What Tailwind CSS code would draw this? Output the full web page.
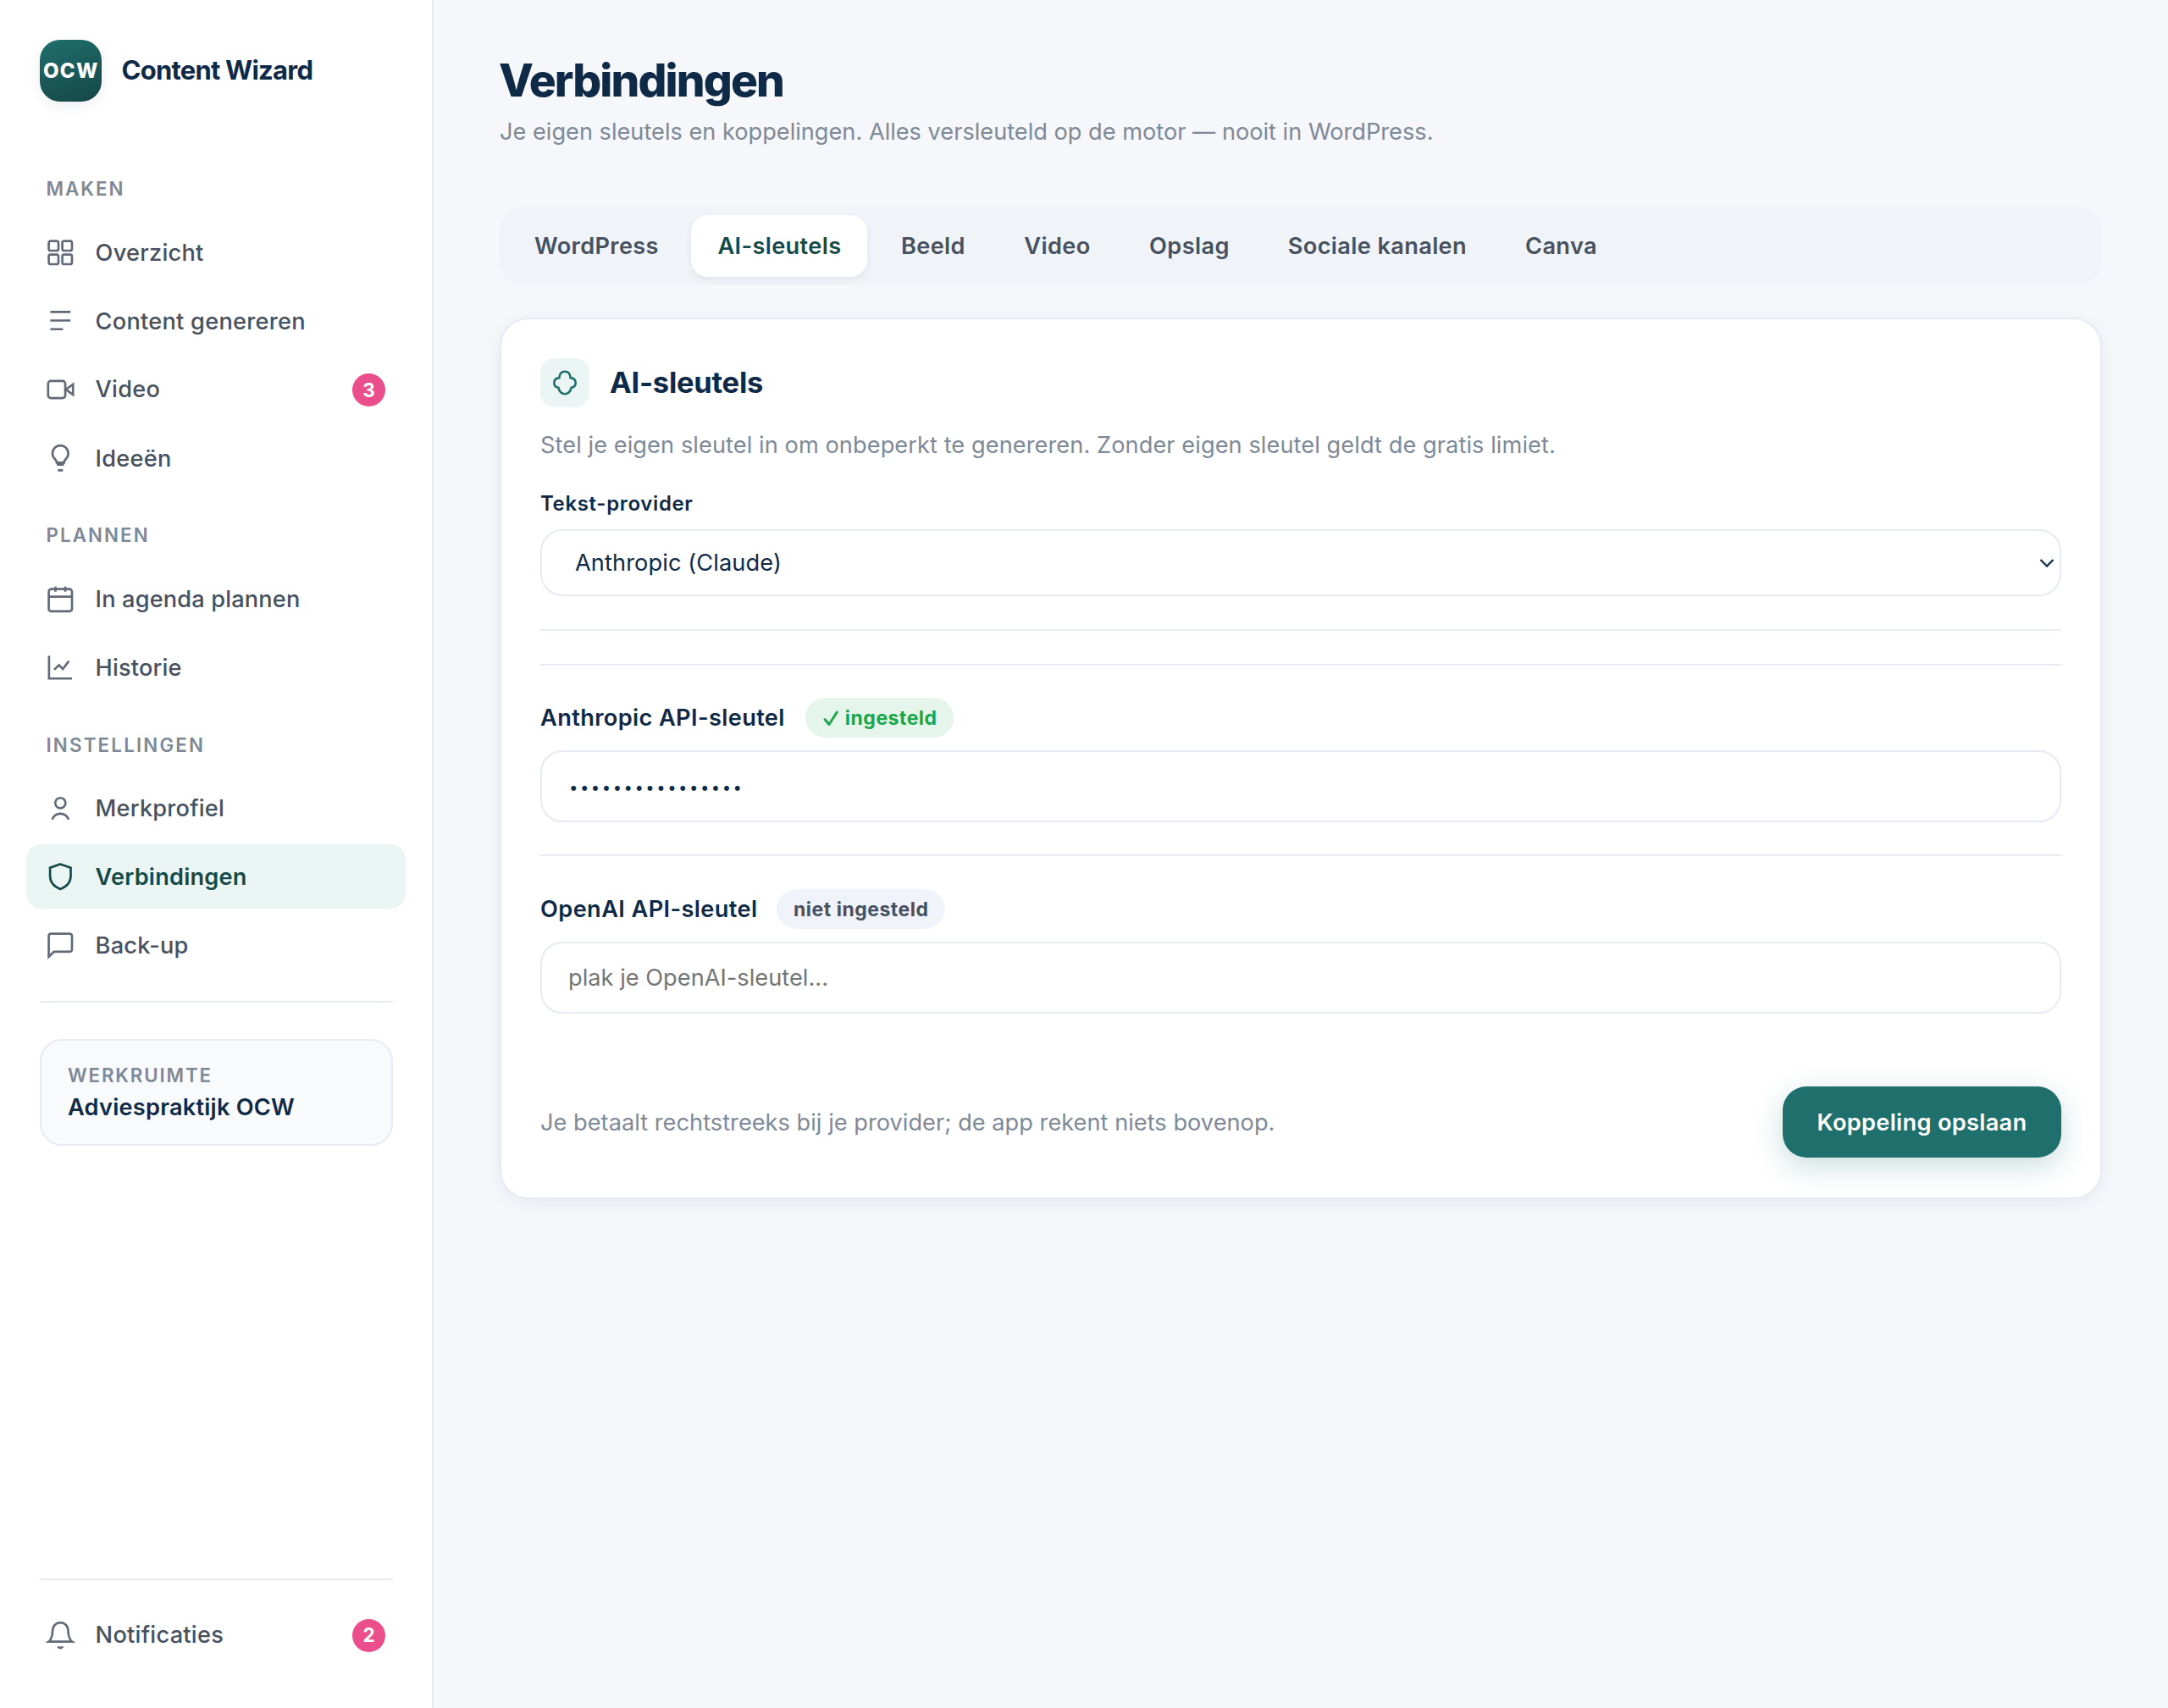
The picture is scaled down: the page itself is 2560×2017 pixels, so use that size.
<!DOCTYPE html>
<html lang="nl">
  <head>
    <meta charset="UTF-8" />
    <title>Content Wizard - Verbindingen</title>
    <script src="https://cdn.jsdelivr.net/npm/@tailwindcss/browser@4"></script>
  </head>
  <body
    class="h-screen flex overflow-hidden bg-[#f5f7fb] font-['Inter','Liberation_Sans',sans-serif] text-[27.2px] text-[#0f2a47]"
  >
    <!-- Zijbalk -->
    <aside
      class="w-[512px] shrink-0 flex flex-col bg-white border-r-2 border-[#e6ebf3] px-[31px] pt-[46.5px] pb-[48px]"
    >
      <div class="flex items-center gap-[23.5px] pl-[15.5px]">
        <div
          class="size-[73.5px] rounded-[24px] bg-linear-160 from-[#1f6f6d] to-[#154646] shadow-[0_5px_15px_rgba(15,42,71,0.08)] flex items-center justify-center text-white text-[24px] font-extrabold tracking-[1.3px] pl-[1px] pt-[2px]"
        >
          OCW
        </div>
        <div class="text-[31px] font-bold tracking-[-0.77px]">
          Content Wizard
        </div>
      </div>

      <h3
        class="mt-[89px] ml-[23.5px] h-[28px] leading-[28px] text-[22.3px] font-semibold tracking-[2px] text-[#7e8998]"
      >
        MAKEN
      </h3>
      <nav
        class="mt-[23px] flex flex-col gap-[5.2px] font-medium text-[#475160] tracking-[0.25px]"
      >
        <a class="h-[76px] flex items-center gap-[23px] px-[22px]">
          <svg class="size-[36.6px] opacity-85" viewBox="0 0 24 24" fill="none" stroke="currentColor" stroke-width="1.75">
            <rect x="3" y="3" width="7.5" height="7.5" rx="1.5" />
            <rect x="13.5" y="3" width="7.5" height="7.5" rx="1.5" />
            <rect x="3" y="13.5" width="7.5" height="7.5" rx="1.5" />
            <rect x="13.5" y="13.5" width="7.5" height="7.5" rx="1.5" />
          </svg>
          <span class="pt-[2px]">Overzicht</span>
        </a>
        <a class="h-[76px] flex items-center gap-[23px] px-[22px]">
          <svg class="size-[36.6px] opacity-85" viewBox="0 0 24 24" fill="none" stroke="currentColor" stroke-width="1.75">
            <path d="M4.2 4.8h15.6M4.2 11.5h15.6M4.2 18.2h9.8" />
          </svg>
          <span class="pt-[2px]">Content genereren</span>
        </a>
        <a class="h-[76px] flex items-center gap-[23px] pl-[22px] pr-[24px]">
          <svg class="size-[36.6px] opacity-85" viewBox="0 0 24 24" fill="none" stroke="currentColor" stroke-width="1.75">
            <rect x="2.5" y="5.2" width="13.3" height="13.2" rx="2" />
            <path d="M16.2 11.8l5.6-4v8z" />
          </svg>
          <span class="flex-1 pt-[1px]">Video</span>
          <span
            class="size-[39px] rounded-full bg-[#ea4f8b] text-white text-[22.5px] font-bold tracking-normal flex items-center justify-center"
            >3</span
          >
        </a>
        <a class="h-[76px] flex items-center gap-[23px] px-[22px]">
          <svg class="size-[36.6px] opacity-85" viewBox="0 0 24 24" fill="none" stroke="currentColor" stroke-width="1.75">
            <path d="M9.2 16.9h5.6M10 21.2h4M12 2a6.1 6.1 0 0 0-6.1 6.2c0 2 .9 3.4 2.1 4.6.8.8 1.1 1.5 1.2 2.5h5.6c.1-1 .4-1.7 1.2-2.5 1.2-1.2 2.1-2.6 2.1-4.6A6.1 6.1 0 0 0 12 2z" />
          </svg>
          <span class="pt-[1px]">Ideeën</span>
        </a>
      </nav>

      <h3
        class="mt-[38.5px] ml-[23.5px] h-[28px] leading-[28px] text-[22.3px] font-semibold tracking-[2.1px] text-[#7e8998]"
      >
        PLANNEN
      </h3>
      <nav
        class="mt-[23px] flex flex-col gap-[5.2px] font-medium text-[#475160] tracking-[0.15px]"
      >
        <a class="h-[76px] flex items-center gap-[23px] px-[22px]">
          <svg class="size-[36.6px] opacity-85" viewBox="0 0 24 24" fill="none" stroke="currentColor" stroke-width="1.75">
            <rect x="3" y="4.4" width="18" height="17.2" rx="2" />
            <path d="M3 10.2h18M8.2 2.5v3.9M15.8 2.5v3.9" />
          </svg>
          <span class="pt-[2px]">In agenda plannen</span>
        </a>
        <a class="h-[76px] flex items-center gap-[23px] px-[22px]">
          <svg class="size-[36.6px] opacity-85" viewBox="0 0 24 24" fill="none" stroke="currentColor" stroke-width="1.75">
            <path d="M3.2 3v17.5H21M7.2 13.7l3.7-3.6 3 3L18.6 7" />
          </svg>
          <span class="pt-[2px]">Historie</span>
        </a>
      </nav>

      <h3
        class="mt-[38.7px] ml-[23.5px] h-[28px] leading-[28px] pt-[1px] text-[22.3px] font-semibold tracking-[2.2px] text-[#7e8998]"
      >
        INSTELLINGEN
      </h3>
      <nav
        class="mt-[23px] flex flex-col gap-[5.2px] font-medium text-[#475160] tracking-[0.2px]"
      >
        <a class="h-[76px] flex items-center gap-[23px] px-[22px]">
          <svg class="size-[36.6px] opacity-85" viewBox="0 0 24 24" fill="none" stroke="currentColor" stroke-width="1.75">
            <circle cx="12" cy="8.1" r="4" />
            <path d="M5.6 20.9c1.1-2.8 3.6-4.6 6.4-4.6s5.3 1.8 6.4 4.6" />
          </svg>
          <span class="pt-[2px]">Merkprofiel</span>
        </a>
        <a
          class="h-[76px] flex items-center gap-[23px] px-[22px] rounded-[18px] bg-[#ebf6f4] text-[#154a49] font-semibold"
        >
          <svg class="size-[36.6px]" viewBox="0 0 24 24" fill="none" stroke="currentColor" stroke-width="1.75">
            <path d="M12 2.3l8 2.7v6.5c0 4.8-3.2 8.2-8 10.1-4.8-1.9-8-5.3-8-10.1V5z" />
          </svg>
          <span class="pt-[2px]">Verbindingen</span>
        </a>
        <a class="h-[76px] flex items-center gap-[23px] px-[22px]">
          <svg class="size-[36.6px] opacity-85" viewBox="0 0 24 24" fill="none" stroke="currentColor" stroke-width="1.75">
            <path d="M21 15.2a1.8 1.8 0 0 1-1.8 1.8H7l-4 3.9V4.8A1.8 1.8 0 0 1 4.8 3h14.4A1.8 1.8 0 0 1 21 4.8z" />
          </svg>
          <span class="pt-[2px]">Back-up</span>
        </a>
      </nav>

      <hr class="mt-[27.5px] mx-[15.5px] border-t-2 border-[#e6ebf2]" />
      <div
        class="mt-[42.8px] mx-[15.5px] h-[126.5px] rounded-[26px] border-2 border-[#e6eaf2] bg-[#f9fafc] pt-[27px] pl-[31.5px]"
      >
        <div
          class="h-[28px] leading-[28px] text-[22.3px] font-semibold tracking-[1.85px] text-[#7e8998]"
        >
          WERKRUIMTE
        </div>
        <div
          class="mt-[5.7px] h-[38px] leading-[38px] font-semibold tracking-[0.22px]"
        >
          Adviespraktijk OCW
        </div>
      </div>

      <!-- Onderkant zijbalk -->
      <hr class="mt-auto mx-[15.5px] border-t-2 border-[#e6eaf2]" />
      <a
        class="mt-[27.3px] h-[76px] flex items-center gap-[23px] pl-[22px] pr-[24px] font-medium text-[#475160] tracking-[0.25px]"
      >
        <svg class="size-[36.6px] opacity-85" viewBox="0 0 24 24" fill="none" stroke="currentColor" stroke-width="1.75">
          <path d="M18 8A6 6 0 0 0 6 8c0 6.8-3 8.8-3 8.8h18s-3-2-3-8.8M13.8 20.6a2 2 0 0 1-3.6 0" />
        </svg>
        <span class="flex-1 pt-[1px]">Notificaties</span>
        <span
          class="size-[39px] rounded-full bg-[#ea4f8b] text-white text-[22.5px] font-bold tracking-normal flex items-center justify-center"
          >2</span
        >
      </a>
    </aside>

    <!-- Inhoud -->
    <main class="flex-1 px-[78px] pt-[65px]">
      <h1
        class="-ml-[1px] h-[60px] leading-[60px] text-[53.3px] font-extrabold tracking-[-1.88px]"
      >
        Verbindingen
      </h1>
      <p
        class="mt-[13px] h-[36px] leading-[36px] text-[#7e8998] tracking-[-0.01px]"
      >
        Je eigen sleutels en koppelingen. Alles versleuteld op de motor — nooit
        in WordPress.
      </p>

      <div
        class="mt-[70px] h-[93px] p-[10px] flex gap-[10px] rounded-[28px] bg-[#f0f4f9] font-semibold text-[#475160] tracking-[0.35px]"
      >
        <button class="pl-[31px] pr-[28.5px] pt-[2px]">WordPress</button>
        <button
          class="px-[31px] pt-[2px] rounded-[20px] bg-white text-[#154a49] shadow-[0_3px_8px_rgba(15,42,71,0.07)]"
        >
          AI-sleutels
        </button>
        <button class="px-[29.5px] pt-[2px]">Beeld</button>
        <button class="px-[30px] pt-[2px]">Video</button>
        <button class="px-[29.5px] pt-[2px]">Opslag</button>
        <button class="px-[29.5px] pt-[2px]">Sociale kanalen</button>
        <button class="px-[29.5px] pt-[2px]">Canva</button>
      </div>

      <section
        class="mt-[38px] h-[1040.5px] rounded-[34px] border-2 border-[#e6eaf2] bg-white px-[46px] pt-[46px] shadow-[0_5px_20px_rgba(15,42,71,0.06)]"
      >
        <div class="flex items-center gap-[24px]">
          <div
            class="size-[58px] rounded-[17px] bg-[#ebf6f4] text-[#1f6f6d] flex items-center justify-center"
          >
            <svg class="size-[36px]" viewBox="-18 -18 36 36" fill="none" stroke="currentColor" stroke-width="2.6">
              <path d="M-6.6-5.9C-6.3-10.5-3.7-13.2 0-13.2S6.3-10.5 6.6-5.9C10.4-5.4 12.7-3.2 12.7 0S10.4 5.4 7.6 5.9C6.4 10.9 3.7 13.2 0 13.2S-6.4 10.9-7.6 5.9C-10.4 5.4-12.7 3.2-12.7 0S-10.4-5.4-6.6-5.9z" />
            </svg>
          </div>
          <h2 class="text-[34.5px] font-bold tracking-[-0.25px]">
            AI-sleutels
          </h2>
        </div>
        <p
          class="mt-[26.5px] h-[36px] leading-[36px] text-[#7e8998] tracking-[0.07px]"
        >
          Stel je eigen sleutel in om onbeperkt te genereren. Zonder eigen
          sleutel geldt de gratis limiet.
        </p>

        <label
          class="block mt-[36px] h-[30px] leading-[30px] text-[24px] font-semibold tracking-[0.65px]"
          >Tekst-provider</label
        >
        <div class="relative mt-[15.5px]">
          <select
            class="block w-full h-[79px] appearance-none rounded-[26px] border-2 border-[#e6eaf2] bg-white pl-[39px] pt-[2px] tracking-[0.1px]"
          >
            <option>Anthropic (Claude)</option>
          </select>
          <svg class="absolute right-[7px] top-[33px] w-[20px] h-[14px]" viewBox="0 0 20 14" fill="none" stroke="#16324f" stroke-width="2.4">
            <path d="M2.5 3l7.5 7.5L17.5 3" />
          </svg>
        </div>

        <hr class="mt-[39px] border-t-2 border-[#e8ebf2]" />
        <hr class="mt-[38.6px] border-t-2 border-[#e8ebf2]" />

        <div class="mt-[38.7px] h-[47px] flex items-center gap-[24px]">
          <span class="pt-[2px] font-semibold tracking-[0.37px]"
            >Anthropic API-sleutel</span
          >
          <span
            class="h-[47px] pl-[20px] pr-[19px] rounded-full bg-[#e5f5ec] text-[#1aa64b] text-[23px] font-bold tracking-[0.5px] flex items-center gap-[7px]"
          >
            <svg class="w-[20px] h-[20px]" viewBox="0 0 20 20" fill="none" stroke="currentColor" stroke-width="2.9" stroke-linecap="round" stroke-linejoin="round">
              <path d="M3 11.5l5 6L17.3 3" />
            </svg>
            ingesteld
          </span>
        </div>
        <input
          type="password"
          value="abcdefghijklmnop"
          class="block w-full mt-[15px] h-[84.7px] rounded-[26px] border-2 border-[#e6eaf2] pl-[32px] pt-[1px] text-[18.5px] tracking-[2.5px]"
        />

        <hr class="mt-[38.2px] border-t-2 border-[#e8ebf2]" />

        <div class="mt-[39.2px] h-[47px] flex items-center gap-[22.5px]">
          <span class="pt-[2px] font-semibold tracking-[0.39px]"
            >OpenAI API-sleutel</span
          >
          <span
            class="h-[47px] px-[20px] rounded-full bg-[#f0f3f9] text-[#475160] text-[23px] font-bold tracking-[0.5px] flex items-center"
            >niet ingesteld</span
          >
        </div>
        <input
          type="text"
          placeholder="plak je OpenAI-sleutel..."
          class="block w-full mt-[15px] h-[84.7px] rounded-[26px] border-2 border-[#e6eaf2] pl-[31px] tracking-[0.02px] placeholder:text-[#757575]"
        />

        <div class="mt-[86px] flex items-center justify-between">
          <p class="pt-[2px] text-[#7e8998] tracking-[0.02px]">
            Je betaalt rechtstreeks bij je provider; de app rekent niets
            bovenop.
          </p>
          <button
            class="w-[329px] h-[84.3px] pt-[2px] rounded-[28px] bg-[#1f6f6d] text-white font-semibold tracking-[0.3px] shadow-[0_10px_34px_rgba(31,111,109,0.24)]"
          >
            Koppeling opslaan
          </button>
        </div>
      </section>
    </main>
  </body>
</html>
